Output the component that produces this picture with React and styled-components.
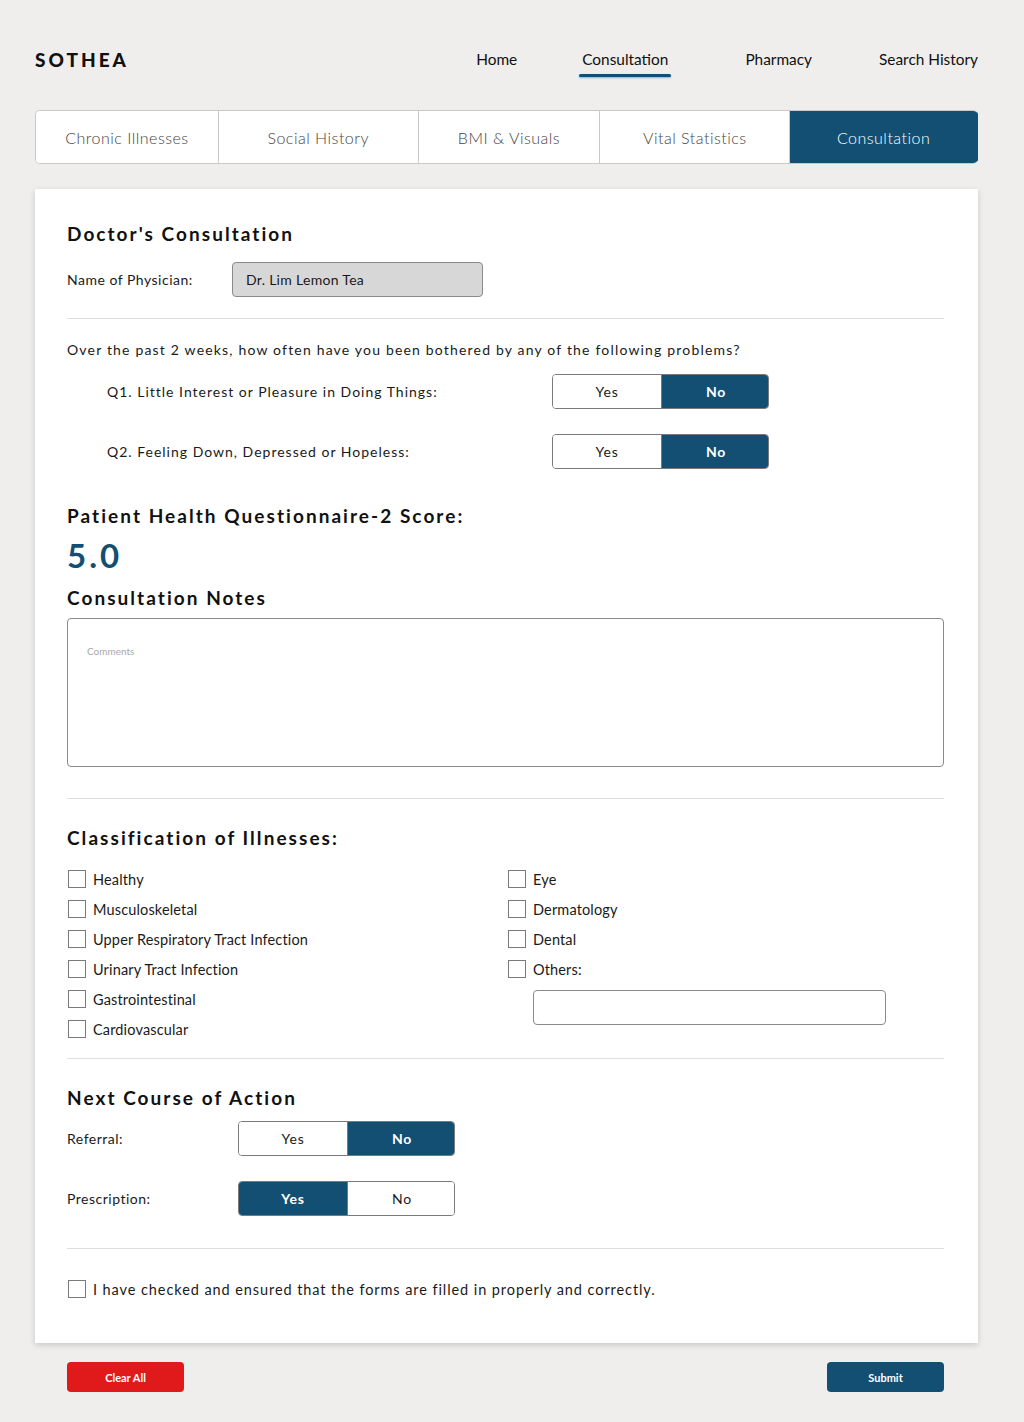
import React from "react";
import styled, { createGlobalStyle, css } from "styled-components";

const BLUE = "#124f72";

const Global = createGlobalStyle`
  html, body { margin: 0; padding: 0; background: #efeeec; }
  body { font-family: "Lato", "Liberation Sans", sans-serif; color: #1a1a1a; }
  * { box-sizing: border-box; }
`;

const Page = styled.div`
  width: 943px;
  margin-left: 35px;
  padding-bottom: 30px;
`;

const Header = styled.header`
  display: flex;
  align-items: center;
  justify-content: space-between;
  height: 70px;
  margin-top: 24px;
`;

const Logo = styled.div`
  font-size: 19px;
  font-weight: 900;
  letter-spacing: 3px;
  color: #111;
`;

const Nav = styled.nav`
  display: flex;
  align-items: center;
  margin-right: -3px;
`;

const NavItem = styled.a`
  position: relative;
  font-size: 15.4px;
  color: #111;
  padding: 0 3px;
  margin-left: ${(p) => p.$ml || 0}px;
  line-height: 20px;
  ${(p) =>
    p.$active &&
    css`
      &::after {
        content: "";
        position: absolute;
        left: 0;
        right: 0;
        bottom: -8px;
        height: 3px;
        border-radius: 2px;
        background: ${BLUE};
        box-shadow: 0 1px 2px rgba(18, 79, 114, 0.4);
      }
    `}
`;

const Tabs = styled.div`
  display: flex;
  margin-top: 16px;
  height: 54px;
  border-radius: 5px;
  overflow: hidden;
  border: 1px solid #c9c9c9;
  border-right: none;
  background: #fff;
`;

const Tab = styled.div`
  width: ${(p) => p.$w}px;
  display: flex;
  align-items: center;
  justify-content: center;
  font-size: 16px;
  font-weight: 300;
  letter-spacing: 0.5px;
  color: ${(p) => (p.$active ? "#fff" : "#444")};
  background: ${(p) => (p.$active ? BLUE : "#fff")};
  border-right: 1px solid ${(p) => (p.$active ? BLUE : "#c9c9c9")};
`;

const Card = styled.section`
  margin-top: 25px;
  background: #fff;
  padding: 33px 34px 39px 32px;
  box-shadow: 0 2px 6px rgba(0, 0, 0, 0.16);
`;

const Heading = styled.h2`
  margin: ${(p) => p.$mt || 0}px 0 0;
  font-size: 19px;
  line-height: 24px;
  font-weight: 700;
  letter-spacing: 2.05px;
  color: #111;
`;

const Score = styled.div`
  margin-top: 9px;
  font-size: 33px;
  line-height: 36px;
  font-weight: 700;
  letter-spacing: 3px;
  color: ${BLUE};
`;

const FieldRow = styled.div`
  display: grid;
  grid-template-columns: ${(p) => p.$label}px auto;
  align-items: center;
  margin-top: ${(p) => p.$mt}px;
  padding-left: ${(p) => p.$indent || 0}px;
`;

const Label = styled.span`
  font-size: 14px;
  letter-spacing: ${(p) => p.$ls ?? 0.5}px;
  color: #1a1a1a;
`;

const ReadOnly = styled.div`
  width: 251px;
  height: 35px;
  display: flex;
  align-items: center;
  padding-left: 13px;
  font-size: 14px;
  letter-spacing: 0.3px;
  background: #d7d7d7;
  border: 1px solid #8a8a8a;
  border-radius: 4px;
`;

const Divider = styled.hr`
  margin: ${(p) => p.$mt}px 0 0;
  border: none;
  border-top: 1px solid #dedede;
`;

const Question = styled.p`
  margin: 21px 0 0;
  font-size: 14px;
  line-height: 20px;
  letter-spacing: 1.18px;
`;

const Toggle = styled.div`
  display: grid;
  grid-template-columns: 108px 109px;
  width: 217px;
  height: 35px;
  border: 1px solid #7a7a7a;
  border-radius: 4px;
  overflow: hidden;
`;

const ToggleOption = styled.div`
  display: flex;
  align-items: center;
  justify-content: center;
  font-size: 14px;
  letter-spacing: 0.8px;
  font-weight: ${(p) => (p.$on ? 700 : 400)};
  color: ${(p) => (p.$on ? "#fff" : "#1a1a1a")};
  background: ${(p) => (p.$on ? BLUE : "#fff")};
  & + & {
    border-left: 1px solid #7a7a7a;
  }
`;

const Notes = styled.div`
  margin-top: 8px;
  height: 149px;
  border: 1px solid #8a8a8a;
  border-radius: 4px;
  padding: 20px 19px;
`;

const Placeholder = styled.span`
  font-size: 10px;
  color: #a8a8a8;
`;

const CheckGrid = styled.div`
  display: grid;
  grid-template-columns: 440px auto;
  margin-top: 14px;
`;

const CheckColumn = styled.div`
  display: flex;
  flex-direction: column;
`;

const CheckRow = styled.label`
  display: flex;
  align-items: center;
  gap: 7px;
  height: 30px;
  margin-top: ${(p) => p.$mt || 0}px;
`;

const Box = styled.span`
  width: 18px;
  height: 18px;
  border: 1px solid #7a7a7a;
  background: #fff;
  flex: none;
  margin-left: 1px;
`;

const CheckText = styled.span`
  font-size: 14.5px;
  letter-spacing: ${(p) => p.$ls ?? 0.15}px;
  color: #1a1a1a;
`;

const OtherInput = styled.div`
  margin: 6px 0 0 26px;
  width: 353px;
  height: 35px;
  border: 1px solid #8a8a8a;
  border-radius: 4px;
`;

const ActionGrid = styled.div`
  display: grid;
  grid-template-columns: 171px auto;
  align-items: center;
  row-gap: 25px;
  margin-top: 11px;
`;

const Footer = styled.div`
  display: flex;
  justify-content: space-between;
  margin-top: 19px;
  padding: 0 34px 0 32px;
`;

const ActionButton = styled.button`
  width: 117px;
  height: 30px;
  border: none;
  border-radius: 4px;
  font-family: inherit;
  font-size: 11px;
  font-weight: 700;
  color: #fff;
  background: ${(p) => (p.$danger ? "#e01a1a" : BLUE)};
`;

const tabs = [
  ["Chronic Illnesses", 183],
  ["Social History", 200],
  ["BMI & Visuals", 182],
  ["Vital Statistics", 190],
  ["Consultation", 188, true],
];

const navItems = [
  ["Home", 0],
  ["Consultation", 59, true],
  ["Pharmacy", 71],
  ["Search History", 61],
];

const left = [
  "Healthy",
  "Musculoskeletal",
  "Upper Respiratory Tract Infection",
  "Urinary Tract Infection",
  "Gastrointestinal",
  "Cardiovascular",
];
const right = ["Eye", "Dermatology", "Dental", "Others:"];

function YesNo({ value }) {
  return (
    <Toggle>
      <ToggleOption $on={value === "yes"}>Yes</ToggleOption>
      <ToggleOption $on={value === "no"}>No</ToggleOption>
    </Toggle>
  );
}

export default function App() {
  return (
    <>
      <Global />
      <Page>
        <Header>
          <Logo>SOTHEA</Logo>
          <Nav>
            {navItems.map(([t, ml, a]) => (
              <NavItem key={t} $ml={ml} $active={a}>
                {t}
              </NavItem>
            ))}
          </Nav>
        </Header>

        <Tabs>
          {tabs.map(([t, w, a]) => (
            <Tab key={t} $w={w} $active={a}>
              {t}
            </Tab>
          ))}
        </Tabs>

        <Card>
          <Heading>Doctor's Consultation</Heading>
          <FieldRow $label={165} $mt={16}>
            <Label $ls={0.5}>Name of Physician:</Label>
            <ReadOnly>Dr. Lim Lemon Tea</ReadOnly>
          </FieldRow>
          <Divider $mt={21} />
          <Question>
            Over the past 2 weeks, how often have you been bothered by any of the following problems?
          </Question>
          <FieldRow $label={445} $indent={40} $mt={14}>
            <Label $ls={1}>Q1. Little Interest or Pleasure in Doing Things:</Label>
            <YesNo value="no" />
          </FieldRow>
          <FieldRow $label={445} $indent={40} $mt={25}>
            <Label $ls={1}>Q2. Feeling Down, Depressed or Hopeless:</Label>
            <YesNo value="no" />
          </FieldRow>

          <Heading $mt={35}>Patient Health Questionnaire-2 Score:</Heading>
          <Score>5.0</Score>
          <Heading $mt={13}>Consultation Notes</Heading>
          <Notes>
            <Placeholder>Comments</Placeholder>
          </Notes>

          <Divider $mt={31} />
          <Heading $mt={27}>Classification of Illnesses:</Heading>
          <CheckGrid>
            <CheckColumn>
              {left.map((l) => (
                <CheckRow key={l}>
                  <Box />
                  <CheckText>{l}</CheckText>
                </CheckRow>
              ))}
            </CheckColumn>
            <CheckColumn>
              {right.map((l) => (
                <CheckRow key={l}>
                  <Box />
                  <CheckText>{l}</CheckText>
                </CheckRow>
              ))}
              <OtherInput />
            </CheckColumn>
          </CheckGrid>

          <Divider $mt={14} />
          <Heading $mt={27}>Next Course of Action</Heading>
          <ActionGrid>
            <Label $ls={0.5}>Referral:</Label>
            <YesNo value="no" />
            <Label $ls={0.5}>Prescription:</Label>
            <YesNo value="yes" />
          </ActionGrid>

          <Divider $mt={32} />
          <CheckRow $mt={25}>
            <Box />
            <CheckText $ls={0.92}>
              I have checked and ensured that the forms are filled in properly and correctly.
            </CheckText>
          </CheckRow>
        </Card>

        <Footer>
          <ActionButton $danger>Clear All</ActionButton>
          <ActionButton>Submit</ActionButton>
        </Footer>
      </Page>
    </>
  );
}
